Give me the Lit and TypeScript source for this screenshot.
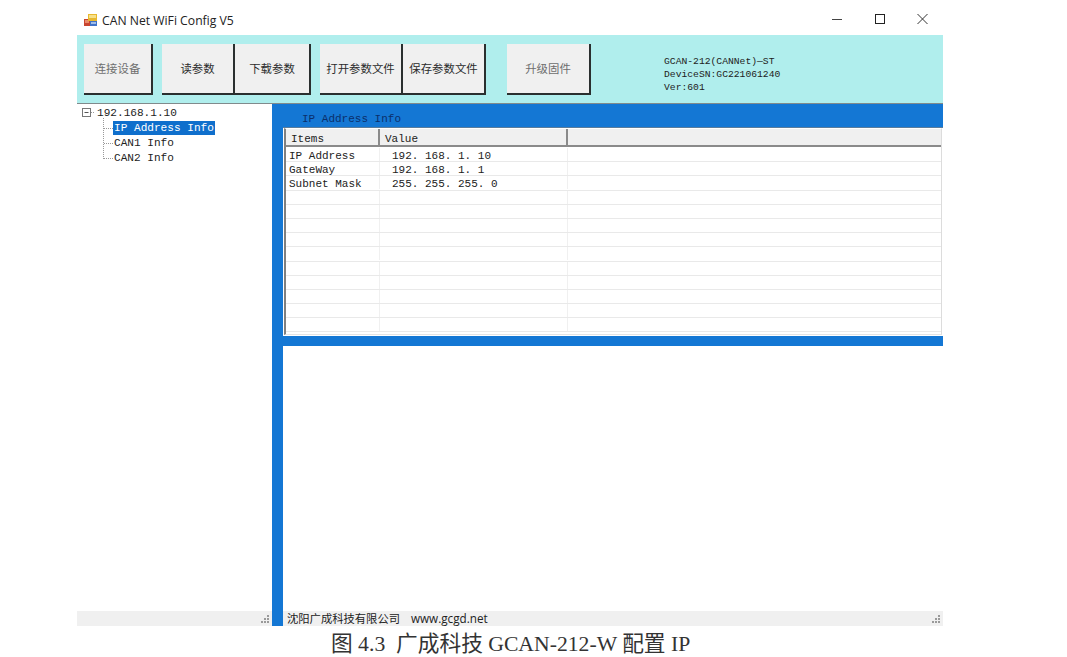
import { LitElement, html, css } from "lit";
import { customElement } from "lit/decorators.js";

const rows = [
  ["IP Address", "192. 168. 1. 10"],
  ["GateWay", "192. 168. 1. 1"],
  ["Subnet Mask", "255. 255. 255. 0"],
  ...Array.from({ length: 10 }, () => ["", ""]),
];

@customElement("app-root")
export class AppRoot extends LitElement {
  static styles = css`
    :host { display: block; width: 1067px; height: 657px; background: #fff; overflow: hidden; }
    .win { width: 866px; margin-left: 77px; display: flex; flex-direction: column; }
    .title { height: 35px; display: flex; align-items: center; padding: 6px 0 0 7px; font: 12.2px "Open Sans", "Liberation Sans", sans-serif; color: #222; box-sizing: border-box; }
    .title svg.ico { margin-right: 5px; }
    .title .txt { flex: 1; }
    .ctl { display: flex; gap: 27px; padding-right: 12px; align-items: center; margin-bottom: 4px; }
    .toolbar { background: #b0eeed; border-bottom: 1px solid #808a8c; display: flex; padding: 9px 0 0 7px; box-sizing: border-box; height: 69px; }
    .btn { height: 51px; padding-bottom: 2px; background: #f0f0f0; border-right: 2px solid #2a2f2f; border-bottom: 2px solid #2a2f2f; box-sizing: border-box; display: flex; align-items: center; justify-content: center; font: 11.4px "Noto Sans CJK SC", sans-serif; color: #2c2c2c; }
    .dim { color: #6e6e6e; }
    .info { margin: 11px 0 0 73px; font: 9.7px/13px "Liberation Mono", monospace; color: #222; }
    .main { display: flex; height: 507px; }
    .tree { width: 195px; position: relative; font: 11.1px/15px "Liberation Mono", monospace; color: #222; padding: 2px 0 0 20px; box-sizing: border-box; }
    .node { height: 15px; white-space: nowrap; }
    .node.sel span { background: #0f6fcc; color: #fff; display: inline-block; padding: 0 1px; height: 14px; line-height: 14px; margin-left: 16px; }
    .node.sub span { margin-left: 17px; }
    .lines { position: absolute; left: 0; top: 0; }
    .split { width: 11px; background: #1477d4; }
    .right { flex: 1; display: flex; flex-direction: column; min-width: 0; }
    .head { height: 24px; background: #1477d4; color: #0b2f6b; font: 11px/30px "Liberation Mono", monospace; padding-left: 19px; box-sizing: border-box; border-bottom: 1px solid #5b7d9c; }
    .list { height: 207px; margin: 0 1px; border-left: 2px solid #808080; border-right: 1px solid #dcdcdc; border-bottom: 1px solid #e4e4e4; border-top: 1px solid #fff; box-sizing: border-box; }
    .lhead, .row { display: grid; grid-template-columns: 94px 188px 1fr; font: 11px "Liberation Mono", monospace; color: #222; }
    .lhead { height: 18px; margin-bottom: 1px; background: #f0f0f0; border-bottom: 2px solid #8a8a8a; line-height: 20px; box-sizing: border-box; }
    .lhead div { padding-left: 5px; border-right: 2px solid #8a8a8a; box-sizing: border-box; height: 16px; }
    .lhead div:last-child { border-right: 0; }
    .row { height: 14.2px; line-height: 17px; border-bottom: 1px solid #e9e9e9; box-sizing: border-box; }
    .row div { border-right: 1px solid #f0f0f0; padding-left: 3px; white-space: pre; height: 13px; }
    .row div:nth-child(2) { padding-left: 12px; }
    .row div:last-child { border-right: 0; }
    .bar { height: 10px; background: #1477d4; margin-top: 1px; }
    .blank { flex: 1; }
    .status { height: 15px; display: flex; background: #f0f0f0; font: 11.3px/15px "Noto Sans CJK SC", sans-serif; color: #222; }
    .sl { width: 195px; position: relative; }
    .ssplit { width: 11px; background: #1477d4; margin-top: -1px; height: 16px; }
    .sr { flex: 1; padding-left: 4px; position: relative; white-space: pre; }
    .www { font: 11.7px/15px "Open Sans", "Liberation Sans", sans-serif; margin-left: 11px; }
    .grip { position: absolute; right: 2px; bottom: 1px; }
    .cap { margin: 5px 0 0 331px; font: 21.7px/26px "Liberation Serif", "Noto Sans CJK SC", serif; color: #333; white-space: pre; }
  `;

  grip() {
    return html`<svg class="grip" width="11" height="11" fill="#9a9a9a">
      <rect x="8" y="1" width="2" height="2"/><rect x="5" y="4" width="2" height="2"/><rect x="8" y="4" width="2" height="2"/>
      <rect x="2" y="7" width="2" height="2"/><rect x="5" y="7" width="2" height="2"/><rect x="8" y="7" width="2" height="2"/></svg>`;
  }

  render() {
    const btns: [string, number, number, boolean][] = [
      ["连接设备", 69, 0, true], ["读参数", 73, 9, false], ["下载参数", 76, 0, false],
      ["打开参数文件", 83, 9, false], ["保存参数文件", 83, 0, false], ["升级固件", 84, 21, true],
    ];
    return html`<div class="win">
      <div class="title">
        <svg class="ico" width="13" height="13" viewBox="0 0 13 13">
          <rect x="0" y="5" width="6" height="7" fill="#c9452f"/><rect x="1" y="6" width="4" height="3" fill="#e88a6a"/>
          <rect x="4" y="0" width="9" height="7" fill="#e8b82e"/><rect x="5" y="1" width="7" height="3" fill="#f6e08a"/>
          <rect x="6" y="7" width="7" height="5" fill="#3f72c8"/><rect x="7" y="8" width="5" height="2" fill="#9fbce8"/>
        </svg>
        <span class="txt">CAN Net WiFi Config V5</span>
        <div class="ctl">
          <svg width="16" height="12"><path d="M3 6.5h10" stroke="#444" fill="none"/></svg>
          <svg width="16" height="12"><rect x="3.5" y="1.5" width="9" height="9" stroke="#222" fill="none"/></svg>
          <svg width="16" height="12"><path d="M2.5 1l10 10M12.5 1l-10 10" stroke="#333" fill="none"/></svg>
        </div>
      </div>
      <div class="toolbar">
        ${btns.map(([t, w, m, d]) => html`<div class="btn ${d ? "dim" : ""}" style="width:${w}px;margin-left:${m}px">${t}</div>`)}
        <div class="info">GCAN-212(CANNet)—ST<br>DeviceSN:GC221061240<br>Ver:601</div>
      </div>
      <div class="main">
        <div class="tree">
          <svg class="lines" width="40" height="70" fill="none">
            <rect x="5.5" y="4.5" width="8" height="8" stroke="#777"/><path d="M7.5 8.5h4" stroke="#555"/>
            <path d="M14 8.5h4M26.5 14v41M27 24.5h9M27 39.5h9M27 54.5h9" stroke="#999" stroke-dasharray="1 1"/>
          </svg>
          <div class="node">192.168.1.10</div>
          <div class="node sel"><span>IP Address Info</span></div>
          <div class="node sub"><span>CAN1 Info</span></div>
          <div class="node sub"><span>CAN2 Info</span></div>
        </div>
        <div class="split"></div>
        <div class="right">
          <div class="head">IP Address Info</div>
          <div class="list">
            <div class="lhead"><div>Items</div><div>Value</div><div></div></div>
            ${rows.map(([a, b]) => html`<div class="row"><div>${a}</div><div>${b}</div><div></div></div>`)}
          </div>
          <div class="bar"></div>
          <div class="blank"></div>
        </div>
      </div>
      <div class="status">
        <div class="sl">${this.grip()}</div>
        <div class="ssplit"></div>
        <div class="sr">沈阳广成科技有限公司<span class="www">www.gcgd.net</span>${this.grip()}</div>
      </div>
    </div>
    <div class="cap">图 4.3  广成科技 GCAN-212-W 配置 IP</div>`;
  }
}
